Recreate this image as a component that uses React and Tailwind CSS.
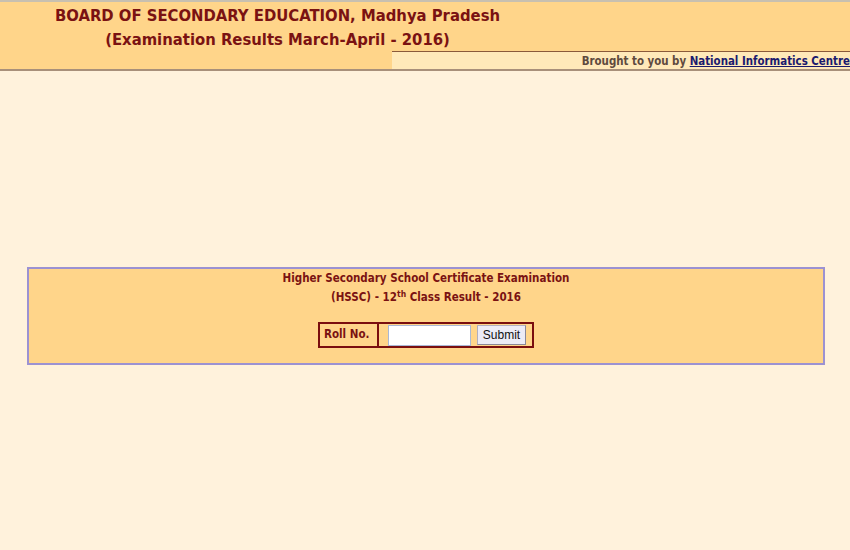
import React from 'react';

const condensed = { fontFamily: '"DejaVu Sans Condensed", "DejaVu Sans", sans-serif' };

function Header() {
  return (
    <div className="border-t-2 border-[#c8c0b0] bg-[#ffd58a]">
      <div className="h-[49px] w-[555px] pt-[2px] text-center text-[16.5px] font-bold leading-[24px] text-[#7a1212]" style={condensed}>
        <div>BOARD OF SECONDARY EDUCATION, Madhya Pradesh</div>
        <div>(Examination Results March-April - 2016)</div>
      </div>
      <div className="flex h-[18px]">
        <div className="w-[392px] shrink-0" />
        <div className="flex flex-1 items-center justify-end overflow-hidden whitespace-nowrap border-t border-[#8a5a3a] bg-[#ffe9b9] pt-[3px] text-[11.4px] font-bold" style={condensed}>
          <span className="text-[#5e4a3e]">Brought to you by&nbsp;</span>
          <a href="#" className="text-[#1a1a6e] underline">National Informatics Centre</a>
        </div>
      </div>
      <div className="h-[2px] bg-[#a8907a]" />
    </div>
  );
}

function ResultBox() {
  return (
    <div className="ml-[27px] mr-[25px] mt-[196px] border-2 border-[#9c92d2] bg-[#ffd58a] pb-[15px]">
      <div className="text-center text-[11.5px] font-bold leading-[19px] text-[#7a1212]" style={condensed}>
        <div>Higher Secondary School Certificate Examination</div>
        <div>
          (HSSC) - 12<sup className="text-[8.5px]">th</sup> Class Result - 2016
        </div>
      </div>
      <div className="mt-[15px] flex justify-center">
        <div className="flex h-[26px] border-2 border-[#7a0e0e]">
          <div className="flex w-[59px] items-center border-r-2 border-[#7a0e0e] pl-[4px] text-[11.5px] font-bold text-[#7a1212]" style={condensed}>
            Roll No.
          </div>
          <div className="flex items-center gap-[6px] pl-[9px] pr-[6px]">
            <input
              type="text"
              className="h-[21px] w-[83px] border border-[#a9b8d6] bg-white outline-none"
            />
            <button
              type="button"
              className="h-[20px] w-[49px] border border-[#b0aec0] border-r-[#8a8898] border-b-[#8a8898] bg-[#ecebf6] text-[12px] text-[#111]"
              style={{ fontFamily: '"Liberation Sans", Arial, sans-serif' }}
            >
              Submit
            </button>
          </div>
        </div>
      </div>
    </div>
  );
}

export default function App() {
  return (
    <div className="h-[550px] w-full overflow-hidden bg-[#fff2dc]">
      <Header />
      <ResultBox />
    </div>
  );
}
